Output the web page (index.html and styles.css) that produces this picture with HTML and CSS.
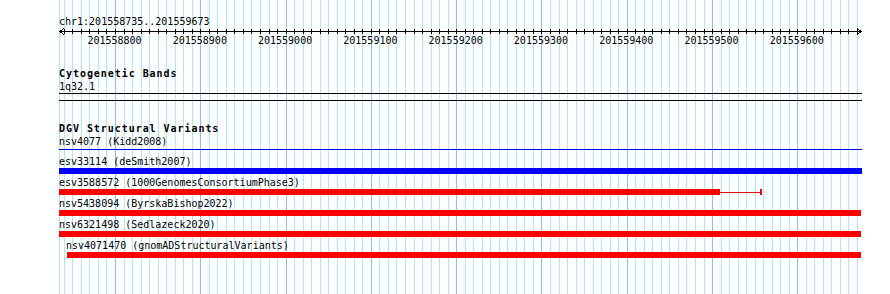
FILE: index.html
```html
<!DOCTYPE html>
<html>
<head>
<meta charset="utf-8">
<title>DGV Structural Variants</title>
<link rel="stylesheet" href="styles.css">
</head>
<body>
<svg class="grid" width="890" height="294" viewBox="0 0 890 294" shape-rendering="crispEdges">
  <path class="minor" d="M59.5 0v294M64.5 0v294M72.5 0v294M81.5 0v294M89.5 0v294M98.5 0v294M106.5 0v294M124.5 0v294M132.5 0v294M141.5 0v294M149.5 0v294M158.5 0v294M166.5 0v294M175.5 0v294M183.5 0v294M192.5 0v294M209.5 0v294M217.5 0v294M226.5 0v294M234.5 0v294M243.5 0v294M251.5 0v294M260.5 0v294M269.5 0v294M277.5 0v294M294.5 0v294M303.5 0v294M311.5 0v294M320.5 0v294M328.5 0v294M337.5 0v294M345.5 0v294M354.5 0v294M362.5 0v294M379.5 0v294M388.5 0v294M396.5 0v294M405.5 0v294M414.5 0v294M422.5 0v294M431.5 0v294M439.5 0v294M448.5 0v294M465.5 0v294M473.5 0v294M482.5 0v294M490.5 0v294M499.5 0v294M507.5 0v294M516.5 0v294M524.5 0v294M533.5 0v294M550.5 0v294M559.5 0v294M567.5 0v294M576.5 0v294M584.5 0v294M593.5 0v294M601.5 0v294M610.5 0v294M618.5 0v294M635.5 0v294M644.5 0v294M652.5 0v294M661.5 0v294M669.5 0v294M678.5 0v294M686.5 0v294M695.5 0v294M704.5 0v294M721.5 0v294M729.5 0v294M738.5 0v294M746.5 0v294M755.5 0v294M763.5 0v294M772.5 0v294M780.5 0v294M789.5 0v294M806.5 0v294M814.5 0v294M823.5 0v294M831.5 0v294M840.5 0v294M848.5 0v294M857.5 0v294"/>
  <path class="major" d="M115.5 0v294M200.5 0v294M286.5 0v294M371.5 0v294M456.5 0v294M541.5 0v294M627.5 0v294M712.5 0v294M797.5 0v294"/>
</svg>

<div class="track">
  <div class="lbl">chr1:201558735..201559673</div>
  <svg class="ruler" width="803" height="7" viewBox="0 0 803 7" shape-rendering="crispEdges">
    <path class="axis" d="M1 3.5H802"/>
    <path class="axis" d="M5.5 1v5M13.5 1v5M22.5 1v5M30.5 1v5M39.5 1v5M47.5 1v5M56.5 1v5M65.5 1v5M73.5 1v5M82.5 1v5M90.5 1v5M99.5 1v5M107.5 1v5M116.5 1v5M124.5 1v5M133.5 1v5M141.5 1v5M150.5 1v5M158.5 1v5M167.5 1v5M175.5 1v5M184.5 1v5M192.5 1v5M201.5 1v5M210.5 1v5M218.5 1v5M227.5 1v5M235.5 1v5M244.5 1v5M252.5 1v5M261.5 1v5M269.5 1v5M278.5 1v5M286.5 1v5M295.5 1v5M303.5 1v5M312.5 1v5M320.5 1v5M329.5 1v5M337.5 1v5M346.5 1v5M355.5 1v5M363.5 1v5M372.5 1v5M380.5 1v5M389.5 1v5M397.5 1v5M406.5 1v5M414.5 1v5M423.5 1v5M431.5 1v5M440.5 1v5M448.5 1v5M457.5 1v5M465.5 1v5M474.5 1v5M482.5 1v5M491.5 1v5M500.5 1v5M508.5 1v5M517.5 1v5M525.5 1v5M534.5 1v5M542.5 1v5M551.5 1v5M559.5 1v5M568.5 1v5M576.5 1v5M585.5 1v5M593.5 1v5M602.5 1v5M610.5 1v5M619.5 1v5M627.5 1v5M636.5 1v5M645.5 1v5M653.5 1v5M662.5 1v5M670.5 1v5M679.5 1v5M687.5 1v5M696.5 1v5M704.5 1v5M713.5 1v5M721.5 1v5M730.5 1v5M738.5 1v5M747.5 1v5M755.5 1v5M764.5 1v5M772.5 1v5M781.5 1v5M789.5 1v5M798.5 1v5"/>
    <polyline class="arrow" points="5,0 1,3.5 5,7"/>
    <polyline class="arrow" points="798,0 802,3.5 798,7"/>
  </svg>
  <div class="ticks">
    <span>201558800</span><span>201558900</span><span>201559000</span><span>201559100</span><span>201559200</span><span>201559300</span><span>201559400</span><span>201559500</span><span>201559600</span>
  </div>

  <div class="title title-cyto">Cytogenetic Bands</div>
  <div class="lbl band">1q32.1</div>
  <div class="rule rule-top"></div>
  <div class="rule rule-bottom"></div>

  <div class="title title-dgv">DGV Structural Variants</div>
  <div class="row row-first">
    <div class="lbl">nsv4077 (Kidd2008)</div>
    <div class="hairline"></div>
  </div>
  <div class="row row-second">
    <div class="lbl">esv33114 (deSmith2007)</div>
    <div class="bar blue" style="width:803px"></div>
  </div>
  <div class="row">
    <div class="lbl">esv3588572 (1000GenomesConsortiumPhase3)</div>
    <div class="bar-wrap">
      <div class="bar red" style="width:661px"></div>
      <div class="stem"></div>
      <div class="cap"></div>
    </div>
  </div>
  <div class="row">
    <div class="lbl">nsv5438094 (ByrskaBishop2022)</div>
    <div class="bar red" style="width:802px"></div>
  </div>
  <div class="row">
    <div class="lbl">nsv6321498 (Sedlazeck2020)</div>
    <div class="bar red" style="width:802px"></div>
  </div>
  <div class="row row-offset">
    <div class="lbl">nsv4071470 (gnomADStructuralVariants)</div>
    <div class="bar red bar-shift" style="width:794px"></div>
  </div>
</div>
</body>
</html>
```
FILE: styles.css
```css
html, body {
  margin: 0;
  padding: 0;
  background: #ffffff;
}

body {
  position: relative;
  width: 890px;
  height: 294px;
  overflow: hidden;
  font-family: "DejaVu Sans Mono", "Liberation Mono", monospace;
  font-size: 10px;
  line-height: 11px;
  color: #000000;
}

.grid {
  position: absolute;
  left: 0;
  top: 0;
  z-index: 0;
}

.grid .minor {
  stroke: #a9e9ef;
  stroke-width: 1;
  fill: none;
}

.grid .major {
  stroke: #84c6e6;
  stroke-width: 1;
  fill: none;
}

.track {
  position: relative;
  z-index: 1;
  margin-left: 59px;
  width: 803px;
  padding-top: 16px;
}

.lbl {
  height: 11px;
  white-space: nowrap;
}

.ruler {
  display: block;
  margin-top: 1px;
}

.ruler .axis {
  stroke: #000000;
  stroke-width: 1;
  fill: none;
}

.ruler .arrow {
  stroke: #000000;
  stroke-width: 1;
  fill: none;
  shape-rendering: crispEdges;
}

.ticks {
  display: flex;
  height: 11px;
  padding-left: 12.9px;
}

.ticks span {
  flex: 0 0 85.29px;
  text-align: center;
  white-space: nowrap;
}

.title {
  height: 11px;
  font-weight: bold;
  letter-spacing: 0.95px;
  white-space: nowrap;
}

.title-cyto {
  margin-top: 22px;
}

.band {
  margin-top: 2px;
}

.rule {
  height: 0;
  border-top: 1px solid #000000;
}

.rule-top {
  margin-top: 1px;
}

.rule-bottom {
  margin-top: 6px;
}

.title-dgv {
  margin-top: 22px;
}

.row {
  margin-top: 3px;
}

.row-first {
  margin-top: 2px;
}

.row-second {
  margin-top: 6px;
}

.row .bar,
.row .bar-wrap {
  margin-top: 1px;
}

.hairline {
  margin-top: 2px;
  height: 1px;
  background: #0000ff;
}

.bar {
  height: 6px;
}

.blue {
  background: #0000ff;
}

.red {
  background: #ff0000;
}

.bar-wrap {
  display: flex;
  align-items: flex-start;
  height: 6px;
}

.bar-wrap .bar {
  margin-top: 0;
}

.stem {
  width: 40px;
  height: 1px;
  margin-top: 3px;
  background: #e01010;
}

.cap {
  width: 2px;
  height: 6px;
  background: #ff0000;
}

.row-offset .lbl {
  padding-left: 7px;
}

.row .bar-shift {
  margin-left: 8px;
}
```
